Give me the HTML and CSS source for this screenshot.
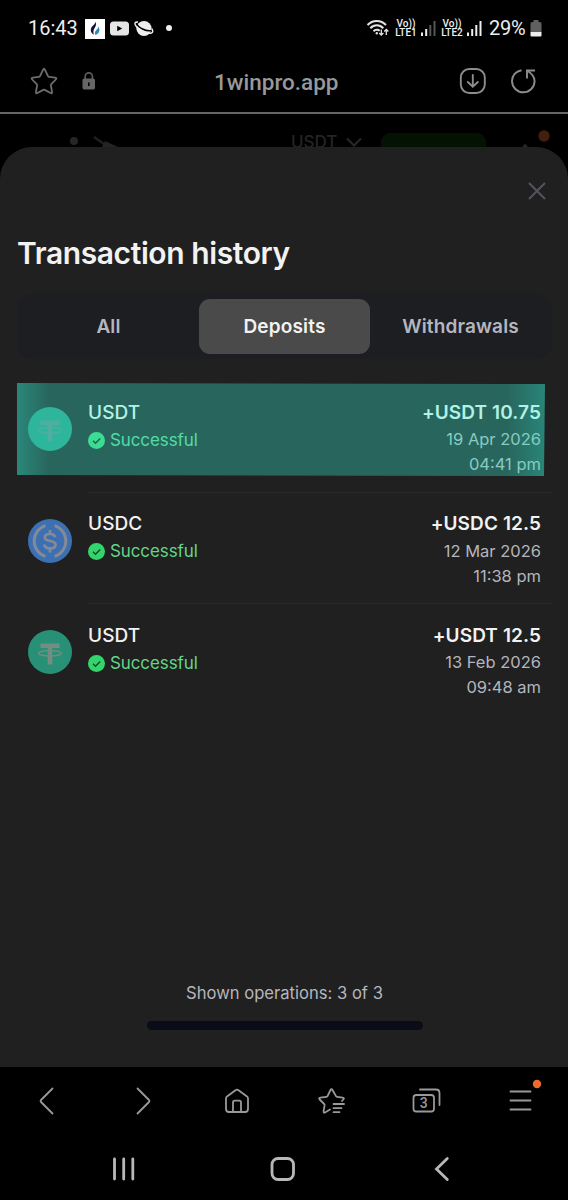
FILE: index.html
```html
<!DOCTYPE html>
<html lang="en">
<head>
    <meta charset="UTF-8">
    <meta name="viewport" content="width=device-width, initial-scale=1.0">
    <title>Transaction history</title>
    <link rel="stylesheet" href="styles.css">
</head>
<body>

    <svg width="0" height="0" class="sprite">
        <symbol id="tether" viewBox="0 0 44 44">
            <circle cx="22" cy="22" r="22" fill="var(--coin)"/>
            <ellipse cx="22" cy="23.300" rx="11.500" ry="2.700" fill="none" stroke="var(--mark)" stroke-width="1.300"/>
            <path d="M12.500 13.500h19v4.500h-7.200v16.500h-4.600v-16.500h-7.200z" fill="var(--mark)"/>
        </symbol>
        <symbol id="check" viewBox="0 0 17 17">
            <circle cx="8.500" cy="8.500" r="8.500" fill="var(--badge)"/>
            <path d="M5 8.800l2.500 2.400 4.700-4.700" fill="none" stroke="var(--tick)" stroke-width="1.500"/>
        </symbol>
    </svg>

    <div class="status-bar">
        <span class="clock">16:43</span>
        <svg class="app-icon" width="20" height="20" viewBox="0 0 20 20">
            <path d="M0 0h20v20H0z" fill="#fff"/>
            <path d="M10.500 2.800c1.400 3.500-.5 5.500-1.500 7.500-.8 1.800-.6 3.700-.2 5.400-2.500-1.300-3.500-3.500-2.800-6.200.8-2.900 4-3.500 4.500-6.700z" fill="#14143c"/>
            <path d="M13.200 7.500c2.200 3 1.600 7-2.700 8.500-1.500-2.500.2-4.200 1.600-5.700.8-.9 1.100-1.800 1.100-2.800z" fill="#3489b8"/>
        </svg>
        <svg class="tube-icon" width="20" height="20" viewBox="0 0 20 20">
            <rect x="0" y="3.500" width="19" height="14" rx="3.500" fill="#e6e6e6"/>
            <path d="M7.200 7.700v5.600l5-2.800z" fill="#000"/>
        </svg>
        <svg class="planet-icon" width="20" height="20" viewBox="0 0 20 20">
            <circle cx="10" cy="10.500" r="7.600" fill="#eee"/>
            <path d="M2.500 5.500c1.500 4 9.500 8.300 14.800 7" fill="none" stroke="#000" stroke-width="1.600"/>
            <path d="M4 4C1 3.800.2 5 1.500 7.300c2.800 4.700 12 9 16 7.700 1.600-.6 1.700-2.200.3-4.300" fill="none" stroke="#eee" stroke-width="1.400"/>
        </svg>
        <span class="more-dot"></span>

        <div class="status-right">
            <svg width="24" height="20" viewBox="0 0 24 20" fill="none" stroke="#e2e2e2" stroke-width="2">
                <path d="M1.500 7c5-5.500 13.500-5.500 18.500 0M4.300 10.300c3.700-4 9.300-4 13 0M7.500 13.300c1.900-2 4.700-2 6.200-.5"/>
                <circle cx="10.800" cy="15.200" r="1.200" fill="#e2e2e2" stroke="none"/>
                <path d="M15.300 11.500v5.500M13.200 15l2.100 2 2.100-2M20.300 17v-5.500M18.200 13.500l2.100-2 2.100 2" stroke-width="1.300"/>
            </svg>
            <span class="volte"><b>Vo))</b><b>LTE1</b></span>
            <svg class="signal" width="15" height="20" viewBox="0 0 15 20" fill="#eee">
                <path d="M0 14.500h2v3.500H0zM4.200 11h2v7h-2z"/>
                <path d="M8.300 7h2v11h-2zM12.500 3h2v15h-2z" fill="#555"/>
            </svg>
            <span class="volte"><b>Vo))</b><b>LTE2</b></span>
            <svg class="signal" width="15" height="20" viewBox="0 0 15 20" fill="#eee">
                <path d="M0 14.500h2v3.500H0zM4.200 11h2v7h-2zM8.300 7h2v11h-2zM12.500 3h2v15h-2z"/>
            </svg>
            <span class="battery-text">29%</span>
            <svg class="battery" width="12" height="20" viewBox="0 0 12 20">
                <path d="M3.500 2h5v2H10q1.500 0 1.500 1.500V14H.5V5.500Q.5 4 2 4h1.500z" fill="#606060"/>
                <path d="M.5 14h11v3.300q0 1.200-1.200 1.200H1.700Q.5 18.500.5 17.300z" fill="#eee"/>
            </svg>
        </div>
    </div>

    <div class="url-bar">
        <svg class="bookmark" width="28" height="28" viewBox="0 0 28 28" fill="none" stroke="#6e6e6e" stroke-width="1.800" stroke-linejoin="round">
            <path d="M13 2.900Q14 1 15 2.900l3 6.200q.3.600 1 .7l6.200.9q2 .3.600 1.800l-4.500 4.700q-.5.500-.4 1.200l1.100 6.500q.3 2-1.500 1.100l-5.800-3.100q-.7-.4-1.400 0L7.500 26q-1.800.9-1.500-1.100l1.100-6.500q.1-.7-.4-1.200l-4.500-4.700q-1.400-1.500.6-1.800L9 9.800q.7-.1 1-.7z"/>
        </svg>
        <svg class="lock" width="14" height="20" viewBox="0 0 14 20">
            <path d="M3.200 9V5.500a3.600 3.600 0 0 1 7.200 0V9" fill="none" stroke="#5c5c5c" stroke-width="1.700"/>
            <rect x=".5" y="7.500" width="12.500" height="11" rx="1.700" fill="#666"/>
            <path d="M6 11.500h1.600v3.500H6z" fill="#000"/>
        </svg>
        <span class="address">1winpro.app</span>
        <svg class="download" width="28" height="28" viewBox="0 0 28 28" fill="none" stroke="#8c8c8c" stroke-width="1.900" stroke-linecap="round">
            <rect x="1.800" y="2" width="24" height="24" rx="8.500"/>
            <path d="M13.800 8v11.500M8.800 15l5 4.700 5-4.700"/>
        </svg>
        <svg class="reload" width="28" height="28" viewBox="0 0 28 28" fill="none" stroke="#8c8c8c" stroke-width="1.900">
            <path d="M11.500 3.200C5.800 4.200 2 8.500 2 14c0 6.200 5 11.300 11.300 11.300S24.600 20.300 24.600 14c0-4.500-2.800-7.500-7.600-10.500"/>
            <path d="M25 3.500h-8v8"/>
        </svg>
    </div>

    <div class="page">
        <div class="site-header">
            <svg class="site-logo" width="70" height="33" viewBox="0 0 70 33">
                <circle cx="14" cy="27" r="4" fill="#262626"/>
                <path d="M34 23l10 7" stroke="#202020" stroke-width="2.500"/>
                <path d="M45 27l13 6H42z" fill="#242424"/>
            </svg>
            <span class="site-currency">USDT</span>
            <svg class="site-chevron" width="16" height="33" viewBox="0 0 16 33" fill="none" stroke="#262626" stroke-width="2.200">
                <path d="M1 24.500l7 7 7-7"/>
            </svg>
            <span class="site-deposit"></span>
            <svg class="site-profile" width="40" height="33" viewBox="0 0 40 33">
                <path d="M15 29.500l3 3.500h-6z" fill="#262626"/>
                <circle cx="34" cy="22" r="5.700" fill="#42200f"/>
            </svg>
        </div>

        <div class="sheet">
            <button class="close" type="button" aria-label="Close">
                <svg width="18" height="18" viewBox="0 0 18 18" fill="none" stroke="#525463" stroke-width="2">
                    <path d="M1 1l16 16M17 1L1 17"/>
                </svg>
            </button>

            <h1>Transaction history</h1>

            <div class="tabs">
                <button class="tab" type="button">All</button>
                <button class="tab active" type="button">Deposits</button>
                <button class="tab" type="button">Withdrawals</button>
            </div>

            <div class="list">
                <div class="row highlight">
                    <svg class="coin"><use href="#tether"/></svg>
                    <div class="details">
                        <div class="name">USDT</div>
                        <div class="state"><svg><use href="#check"/></svg>Successful</div>
                    </div>
                    <div class="amounts">
                        <div class="amount">+USDT 10.75</div>
                        <div class="date">19 Apr 2026</div>
                        <div class="date">04:41 pm</div>
                    </div>
                </div>
                <div class="row">
                    <svg class="coin" viewBox="0 0 44 44">
                        <circle cx="22" cy="22" r="22" fill="#3c70b3"/>
                        <path d="M17.500 6.700a16 16 0 0 0 0 30.600M26.500 6.700a16 16 0 0 1 0 30.600" fill="none" stroke="#858b94" stroke-width="2.900"/>
                        <path d="M22 11v4M22 29v4.500M27.200 18.300c-.5-2.200-2.300-3.300-5.200-3.300-3.200 0-5.200 1.400-5.200 3.500 0 5 10.800 2 10.800 7.200 0 2.200-2.200 3.700-5.600 3.700-3.300 0-5.400-1.400-5.800-3.900" fill="none" stroke="#858b94" stroke-width="2.700"/>
                    </svg>
                    <div class="details">
                        <div class="name">USDC</div>
                        <div class="state"><svg><use href="#check"/></svg>Successful</div>
                    </div>
                    <div class="amounts">
                        <div class="amount">+USDC 12.5</div>
                        <div class="date">12 Mar 2026</div>
                        <div class="date">11:38 pm</div>
                    </div>
                </div>
                <div class="row">
                    <svg class="coin"><use href="#tether"/></svg>
                    <div class="details">
                        <div class="name">USDT</div>
                        <div class="state"><svg><use href="#check"/></svg>Successful</div>
                    </div>
                    <div class="amounts">
                        <div class="amount">+USDT 12.5</div>
                        <div class="date">13 Feb 2026</div>
                        <div class="date">09:48 am</div>
                    </div>
                </div>
            </div>

            <div class="summary">
                <p>Shown operations: 3 of 3</p>
                <div class="progress"></div>
            </div>
        </div>
    </div>

    <div class="toolbar">
        <svg viewBox="0 0 40 40"><path d="M26.500 7.500L15 19q-1 1 0 2l11.500 11.500"/></svg>
        <svg viewBox="0 0 40 40"><path d="M16.500 7.500L28 19q1 1 0 2L16.500 32.500"/></svg>
        <svg viewBox="0 0 40 40"><path d="M10 17.500q0-1.300 1-2.100l8.500-6.200q1.500-1.100 3 0l8.500 6.200q1 .8 1 2.100V28q0 3-3 3H13q-3 0-3-3zM17 31V21.500q0-1.800 1.800-1.800h4.400q1.800 0 1.800 1.800V31"/></svg>
        <svg viewBox="0 0 40 40"><path d="M31 20l1.300-1.500q1.400-1.500-.6-1.800l-5.700-.9q-.7-.1-1-.7L21.500 9q-1-1.900-2 0l-3 6.100q-.3.600-1 .7l-6.200.9q-2 .3-.6 1.800l4.500 4.500q.5.500.4 1.200l-1 6q-.3 2 1.500 1.200L19 28.500M22.500 23h10.500M22.500 27.200h8M22.500 31.200h6"/></svg>
        <svg viewBox="0 0 40 40"><path d="M14 8.500h16q3.500 0 3.500 3.500v12"/><rect x="7.500" y="14" width="20.500" height="16.500" rx="2.800"/><text x="17.700" y="27.400">3</text></svg>
        <svg viewBox="0 0 40 40"><path d="M9.500 10.500h20M9.500 19.500h20M9.500 28.500h20"/><circle cx="36" cy="3" r="4.200"/></svg>
    </div>

    <div class="nav-bar">
        <svg viewBox="0 0 30 30"><path d="M5.500 5v20M14.700 5v20M23.800 5v20"/></svg>
        <svg viewBox="0 0 30 30"><rect x="4" y="4.500" width="21.500" height="21" rx="6"/></svg>
        <svg viewBox="0 0 30 30"><path d="M20.300 4.500L9.500 15l10.800 10.500"/></svg>
    </div>

</body>
</html>
```
FILE: styles.css
```css
/* General styles */
* {
    box-sizing: border-box;
}

body {
    margin: 0;
    width: 568px;
    height: 1200px;
    overflow: hidden;
    background-color: #000;
    color: #f2f2f2;
    font-family: Inter, sans-serif;
}

svg {
    flex: none;
    overflow: visible;
}

button {
    padding: 0;
    border: none;
    background: none;
    font-family: inherit;
}

.sprite {
    display: none;
}

/* Phone status bar */
.status-bar {
    display: flex;
    align-items: center;
    height: 56px;
    padding: 0 26px 0 28px;
    font-family: Roboto, sans-serif;
    font-size: 20px;
    color: #eee;
}

.clock {
    width: 50px;
}

.app-icon {
    margin: 2px 0 0 7px;
}

.tube-icon {
    margin-left: 5px;
}

.planet-icon {
    margin-left: 4px;
}

.more-dot {
    width: 6px;
    height: 6px;
    margin-left: 12px;
    border-radius: 50%;
    background-color: #eee;
}

.status-right {
    display: flex;
    align-items: center;
    margin-left: auto;
}

.volte {
    display: flex;
    flex-direction: column;
    align-items: center;
    width: 22px;
    margin-left: 5px;
    font-size: 10px;
    line-height: 9px;
}

.volte b {
    font-weight: 500;
}

.signal {
    margin-left: 4px;
}

.battery-text {
    width: 39px;
    margin-left: 7px;
    letter-spacing: -0.2px;
}

.battery {
    margin-left: 2px;
}

/* Browser address bar */
.url-bar {
    display: flex;
    align-items: center;
    height: 58px;
    padding: 0 30px 6px 30px;
    border-bottom: 2px solid #666;
}

.lock {
    margin-left: 24px;
}

.address {
    width: 130px;
    margin: 2px 0 0 118px;
    font-family: Roboto, sans-serif;
    font-size: 22.5px;
    font-weight: 500;
    color: #999;
}

.download {
    margin-left: auto;
}

.reload {
    margin-left: 23px;
}

/* Site behind the sheet */
.site-header {
    display: flex;
    height: 33px;
    padding-left: 60px;
    overflow: hidden;
}

.site-currency {
    width: 47px;
    margin: 17px 0 0 161px;
    font-size: 17px;
    font-weight: 500;
    line-height: 22px;
    color: #242424;
}

.site-chevron {
    margin-left: 8px;
}

.site-deposit {
    width: 105px;
    height: 40px;
    margin: 19px 0 0 19px;
    border-radius: 9px;
    background-color: #031202;
}

.site-profile {
    margin-left: 24px;
}

/* Transaction sheet */
.sheet {
    display: flex;
    flex-direction: column;
    height: 920px;
    padding: 35px 16px 0 17px;
    border-radius: 32px 32px 0 0;
    background-color: #202020;
}

.close {
    align-self: flex-end;
    width: 18px;
    height: 18px;
    margin-right: 6px;
}

.close svg {
    display: block;
}

h1 {
    margin: 34px 0 0;
    font-size: 30px;
    font-weight: 600;
    line-height: 38px;
    letter-spacing: -0.4px;
}

.tabs {
    display: grid;
    grid-template-columns: 171px 171px 1fr;
    gap: 5px;
    height: 66px;
    margin-top: 21px;
    padding: 6px;
    border-radius: 16px;
    background-color: #1d1e22;
}

.tab {
    height: 55px;
    border-radius: 11px;
    font-size: 19px;
    font-weight: 600;
    letter-spacing: 0.15px;
    color: #b5b6c0;
}

.tab.active {
    background-color: #4a4a4a;
    color: #f2f2f2;
}

.list {
    margin-top: 22px;
}

.row {
    --coin: #279077;
    --mark: #748c82;
    --badge: #34d46c;
    --tick: #164a2a;
    position: relative;
    display: flex;
    height: 111.7px;
    padding: 18.500px 11px 0;
}

.coin {
    width: 44px;
    height: 44px;
    margin-top: 7.500px;
}

.details {
    flex: 1;
    margin-left: 16px;
}

.row:not(:last-child)::after {
    content: "";
    position: absolute;
    left: 71px;
    right: 0;
    bottom: 0;
    height: 1px;
    background-color: #29292b;
}

.name,
.amount {
    font-size: 19px;
    font-weight: 600;
    line-height: 25px;
    letter-spacing: 0.1px;
}

.name {
    font-weight: 500;
}

.state {
    display: flex;
    align-items: center;
    gap: 5px;
    margin-top: 3px;
    font-size: 17px;
    line-height: 25px;
    letter-spacing: -0.1px;
    color: #62d588;
}

.state svg {
    width: 17px;
    height: 17px;
}

.amounts {
    text-align: right;
}

.date {
    font-size: 16.5px;
    line-height: 25px;
    color: #b4b5bd;
}

.amount + .date {
    margin-top: 2.5px;
}

.highlight {
    --coin: #2db69b;
    --mark: #4fae9d;
    --badge: #3cdc93;
    --tick: #17684f;
    z-index: 0;
}

.highlight::before {
    content: "";
    position: absolute;
    z-index: -1;
    top: 2px;
    left: 0;
    width: 528px;
    height: 93px;
    background: linear-gradient(90deg, #2a877a, #28665d 32px, #28665d 490px, #298578);
    clip-path: polygon(0 0, 100% 1px, 527px 100%, 0 92px);
}

.highlight .name,
.highlight .amount {
    color: #b0f3e6;
}

.highlight .state {
    color: #51dda4;
}

.highlight .date {
    color: #88cbc1;
}

/* Bottom summary */
.summary {
    display: flex;
    flex-direction: column;
    align-items: center;
    margin-top: auto;
    padding-bottom: 37px;
}

.summary p {
    margin: 0;
    font-size: 16.6px;
    line-height: 24px;
    color: #b5b6be;
}

.progress {
    width: 276px;
    height: 9px;
    margin-top: 16px;
    border-radius: 5px;
    background-color: #0a0d17;
}

/* Browser toolbar */
.toolbar {
    display: flex;
    align-items: center;
    justify-content: space-between;
    height: 68px;
    padding: 0 27px 0 26px;
}

.toolbar svg {
    width: 40px;
    height: 40px;
    fill: none;
    stroke: #999;
    stroke-width: 1.8;
    stroke-linecap: round;
}

.toolbar text {
    fill: #999;
    stroke: none;
    font-family: Roboto, sans-serif;
    font-size: 14px;
    font-weight: 500;
    text-anchor: middle;
}

.toolbar circle {
    fill: #ec6a2c;
    stroke: none;
}

/* Android navigation */
.nav-bar {
    display: flex;
    align-items: center;
    justify-content: space-between;
    height: 65px;
    padding: 3px 111px 0 109px;
}

.nav-bar svg {
    width: 30px;
    height: 30px;
    fill: none;
    stroke: #b8b8b8;
    stroke-width: 2.8;
    stroke-linecap: round;
}
```
